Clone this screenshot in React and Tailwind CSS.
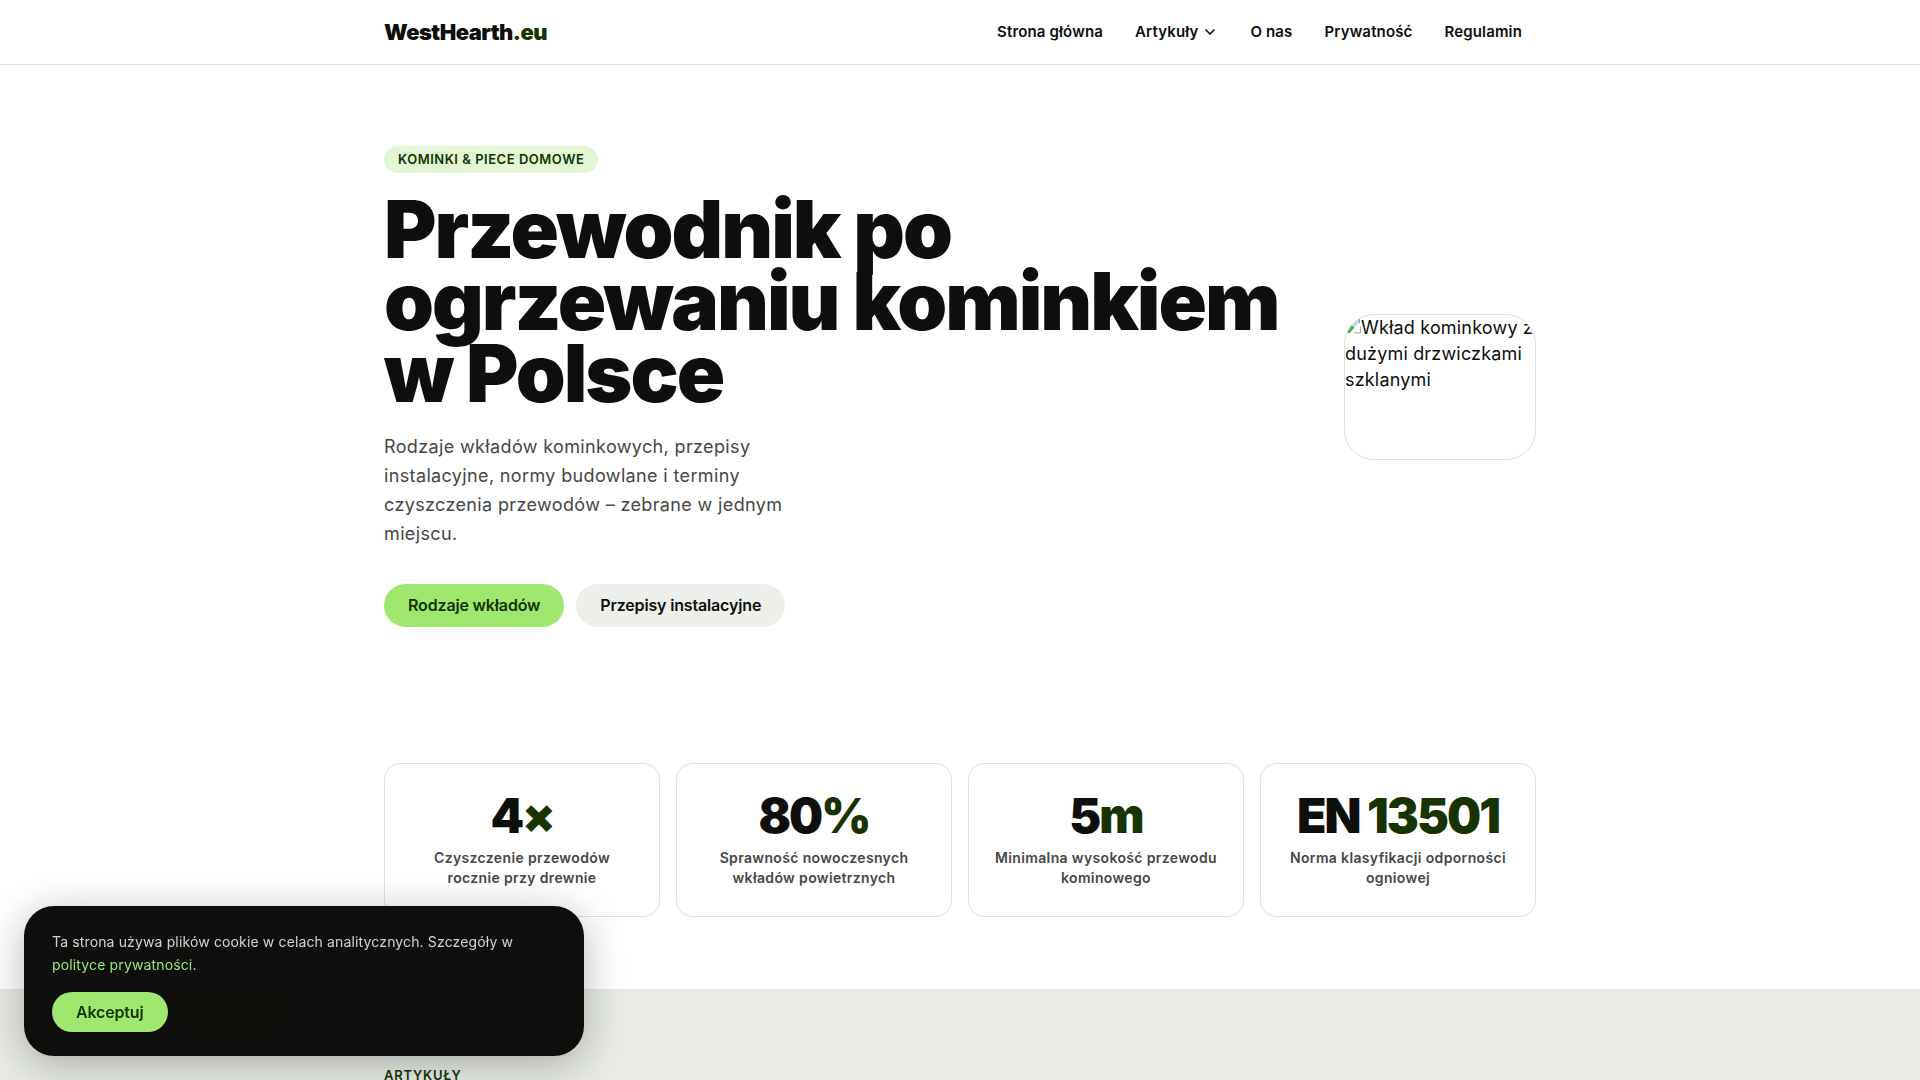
import { ChevronDown } from "lucide-react";

const navLinks = [
  { label: "Strona główna", href: "#" },
  { label: "Artykuły", href: "#artykuly", hasMenu: true },
  { label: "O nas", href: "#o-nas" },
  { label: "Prywatność", href: "#prywatnosc" },
  { label: "Regulamin", href: "#regulamin" },
];

const stats = [
  { value: "4", accent: "×", label: "Czyszczenie przewodów rocznie przy drewnie" },
  { value: "80", accent: "%", label: "Sprawność nowoczesnych wkładów powietrznych" },
  { value: "5", accent: "m", label: "Minimalna wysokość przewodu kominowego" },
  { value: "EN ", accent: "13501", label: "Norma klasyfikacji odporności ogniowej" },
];

const Header = () => (
  <header className="border-b border-[#dfe0de] bg-white">
    <div className="mx-auto flex h-16 max-w-[1200px] items-center justify-between px-6">
      <a href="#" className="text-[22px] leading-8 font-black tracking-tight">
        WestHearth<span className="text-[#163300]">.eu</span>
      </a>
      <nav className="flex gap-1">
        {navLinks.map((link) => (
          <a
            key={link.label}
            href={link.href}
            className="flex items-center gap-1 rounded-full px-3.5 py-2 text-[15px] leading-6 font-semibold tracking-[0.01em]"
          >
            {link.label}
            {link.hasMenu && <ChevronDown size={16} strokeWidth={2.5} />}
          </a>
        ))}
      </nav>
    </div>
  </header>
);

const PillLink = ({ href, primary, children }) => (
  <a
    href={href}
    className={
      primary
        ? "rounded-full bg-[#9fe870] px-6 py-2.5 text-base leading-[23px] font-semibold tracking-[-0.01em] text-[#163300]"
        : "rounded-full bg-[#163300]/8 px-6 py-2.5 text-base leading-[23px] font-semibold tracking-[-0.01em]"
    }
  >
    {children}
  </a>
);

// Picture frame in its unloaded state: placeholder icon plus the description
const HeroPicture = () => (
  <div className="h-[146px] w-48 shrink-0 overflow-hidden rounded-[30px] border border-[#dfe0de] text-lg leading-[26px] tracking-[0.01em]">
    <svg className="inline-block align-baseline" width="16" height="16" viewBox="0 0 16 16" aria-hidden="true">
      <path d="M1 1h13v14H1z" fill="#c6d5f5" />
      <path d="M1 15v-3l5-5 5 4-3 4z" fill="#4caf36" />
      <path d="M15 3 4 16h12V3z" fill="#fff" />
      <path d="M14.500 1v4M15.500 9v6H9" fill="none" stroke="#9aa0a6" />
    </svg>
    Wkład kominkowy&nbsp;z dużymi drzwiczkami szklanymi
  </div>
);

const Hero = () => (
  <section className="mx-auto flex max-w-[1200px] items-center justify-between gap-16 px-6 pt-[81px] pb-20">
    <div className="flex flex-col items-start">
      <span className="rounded-full bg-[#e2f6d5] px-3.5 py-1 text-[13px] leading-[19px] font-semibold tracking-[0.04em] text-[#163300] uppercase">
        Kominki &amp; piece domowe
      </span>
      <h1 className="mt-5 text-[80px] leading-[72px] font-black tracking-tight">
        Przewodnik po
        <br />
        ogrzewaniu kominkiem
        <br />w Polsce
      </h1>
      <p className="mt-[23px] max-w-[420px] text-lg leading-[29px] tracking-[0.02em] text-[#454745]">
        Rodzaje wkładów kominkowych, przepisy instalacyjne, normy budowlane i terminy czyszczenia
        przewodów – zebrane w jednym miejscu.
      </p>
      <div className="mt-9 flex gap-3">
        <PillLink href="#rodzaje" primary>
          Rodzaje wkładów
        </PillLink>
        <PillLink href="#przepisy">Przepisy instalacyjne</PillLink>
      </div>
    </div>
    <HeroPicture />
  </section>
);

const Stats = () => (
  <section className="mx-auto grid max-w-[1200px] grid-cols-4 gap-4 px-6 pt-14 pb-18">
    {stats.map((stat) => (
      <div key={stat.label} className="rounded-2xl border border-[#dfe0de] px-6 py-7 text-center">
        <div className="text-5xl leading-12 font-black tracking-[-0.04em]">
          {stat.value}
          <span className="text-[#163300]">{stat.accent}</span>
        </div>
        <p className="mt-2 text-sm leading-5 font-semibold tracking-wide text-[#454745]">{stat.label}</p>
      </div>
    ))}
  </section>
);

const CookieBanner = () => (
  <div className="fixed bottom-6 left-6 w-[560px] rounded-[30px] bg-[#0e0f0c] px-7 py-6 shadow-[0_8px_40px_rgba(14,15,12,0.3)]">
    <p className="text-sm leading-[23px] tracking-[0.01em] text-white/80">
      Ta strona używa plików cookie w celach analitycznych. Szczegóły w{" "}
      <a href="#prywatnosc" className="text-[#9fe870]">
        polityce prywatności
      </a>
      .
    </p>
    <div className="mt-4 flex gap-2.5">
      <button className="rounded-full bg-[#9fe870] px-6 py-2 text-base font-semibold tracking-[-0.01em] text-[#163300]">
        Akceptuj
      </button>
      <button className="rounded-full bg-[#163300]/8 px-6 py-2 text-base font-semibold tracking-[-0.01em] text-[#0e0f0c]">
        Odrzuć
      </button>
    </div>
  </div>
);

const App = () => {
  return (
    <div className="min-h-screen bg-white font-['Inter',sans-serif] text-[#0e0f0c]">
      <Header />
      <main>
        <Hero />
        <Stats />
        <section id="artykuly" className="bg-[#e8ebe6] pt-[77px] pb-20">
          <div className="mx-auto max-w-[1200px] px-6">
            <h2 className="text-[13px] leading-[19px] font-semibold tracking-[0.06em] text-[#163300] uppercase">
              Artykuły
            </h2>
          </div>
        </section>
      </main>
      <CookieBanner />
    </div>
  );
};

export default App;
